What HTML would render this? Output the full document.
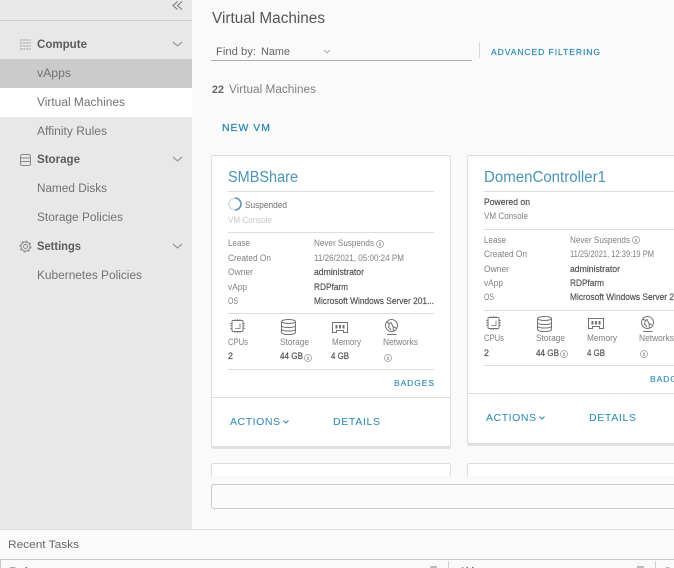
<!DOCTYPE html>
<html lang="en"><head><meta charset="utf-8"><title>Virtual Machines</title>
<style>
html,body{margin:0;padding:0;width:674px;height:568px;overflow:hidden;background:#fafafa}
svg{display:block}
text{font-family:"Liberation Sans",sans-serif;font-size:11px;fill:#777}
.nav{fill:#727272;font-size:11.500px}
.navb{fill:#5c5c5c;font-size:11.500px;font-weight:bold}
.lnk{fill:#2686b0;font-size:10.500px}
.ttl{fill:#4a94b8;font-size:15.500px}
.s{font-size:9.500px;fill:#808080}
.d,.db{font-size:9.500px;fill:#505050;stroke:#505050;stroke-width:.18}
.ic{fill:none;stroke:#737373;stroke-width:1}
.chev{fill:none;stroke:#999;stroke-width:1.200}
.ln{stroke:#dedede;stroke-width:1}
</style></head>
<body>
<svg width="674" height="568" viewBox="0 0 674 568" xmlns="http://www.w3.org/2000/svg">
<defs>
<g id="i"><circle cx="0" cy="0" r="3.500" fill="none" stroke="#999" stroke-width=".8"/><path d="M0-1.500V2" stroke="#777" stroke-width="1"/></g>
<g id="cpu" class="ic"><rect x="2" y="1.500" width="11" height="11" rx="1"/><path d="M10 4.500V9.500H5M0 4.500H2M0 7H2M0 9.500H2M13 4.500H15M13 7H15M13 9.500H15M5 0V1.500M7.500 0V1.500M10 0V1.500M5 12.500V14M7.500 12.500V14M10 12.500V14" stroke-width=".8"/></g>
<g id="sto" class="ic"><ellipse cx="7.500" cy="2.500" rx="7" ry="2"/><path d="M.5 2.500V13Q.5 15.500 7.500 15.500T14.500 13V2.500M.5 6.500Q.5 8.500 7.500 8.500T14.500 6.500M.5 10Q.5 12 7.500 12T14.500 10"/></g>
<g id="mem" class="ic"><path d="M.5.5H15.500V10.500H11.500V8.500H4.500V10.500H.5Z"/><path d="M4.500 3V6.500M8 3V6.500M11.500 3V6.500" stroke-width="2"/></g>
<g id="net" class="ic"><circle cx="6.500" cy="6.500" r="6"/><path d="M1.500 3L4.500 4.500 6 3.500 8 7.500 11 9M4.500 4.500L3.500 8 6 11M8 7.500L8.500 12.500M2 15.500H11.500"/></g>
</defs>

<rect width="674" height="568" fill="#fafafa"/>

<!-- sidebar -->
<rect x="0" y="0" width="192" height="529" fill="#e8e8e8"/>
<rect x="0" y="20" width="192" height="1" fill="#cfcfcf"/>
<rect x="0" y="59" width="192" height="29" fill="#cbcbcb"/>
<rect x="0" y="88" width="192" height="29" fill="#ffffff"/>
<path d="M177.500 1.500L173 5.500 177.500 9.500M182 1.500L177.500 5.500 182 9.500" fill="none" stroke="#777" stroke-width="1"/>

<path d="M20 40h11M20 43h11M20 46h11M20 49h11" fill="none" stroke="#b5b5b5" stroke-width="1.600" stroke-dasharray="2.200 1"/>
<text class="navb" x="37" y="48" textLength="50" lengthAdjust="spacingAndGlyphs">Compute</text>
<path d="M173 42L177.500 46 182 42" class="chev"/>
<text class="nav" x="37" y="77" textLength="34" lengthAdjust="spacingAndGlyphs">vApps</text>
<text class="nav" x="37" y="106" textLength="88" lengthAdjust="spacingAndGlyphs">Virtual Machines</text>
<text class="nav" x="37" y="135" textLength="70" lengthAdjust="spacingAndGlyphs">Affinity Rules</text>

<path d="M20.500 156.500Q20.500 154.500 22.500 154.500H28.500Q30.500 154.500 30.500 156.500V164Q30.500 165.500 28.500 165.500H22.500Q20.500 165.500 20.500 164ZM20.500 158H30.500M20.500 161.500H30.500" fill="none" stroke="#888"/>
<text class="navb" x="37" y="163" textLength="43" lengthAdjust="spacingAndGlyphs">Storage</text>
<path d="M173 157L177.500 161 182 157" class="chev"/>
<text class="nav" x="37" y="192" textLength="70" lengthAdjust="spacingAndGlyphs">Named Disks</text>
<text class="nav" x="37" y="221" textLength="86" lengthAdjust="spacingAndGlyphs">Storage Policies</text>

<circle cx="25.500" cy="246.500" r="2" fill="none" stroke="#888" stroke-width=".9"/>
<circle cx="25.500" cy="246.500" r="4.500" fill="none" stroke="#888" stroke-width=".9"/>
<circle cx="25.500" cy="246.500" r="5.500" fill="none" stroke="#888" stroke-width="1.100" stroke-dasharray="2 2.300"/>
<text class="navb" x="37" y="250" textLength="44" lengthAdjust="spacingAndGlyphs">Settings</text>
<path d="M173 244L177.500 248 182 244" class="chev"/>
<text class="nav" x="37" y="279" textLength="105" lengthAdjust="spacingAndGlyphs">Kubernetes Policies</text>

<!-- header -->
<text x="212" y="23" textLength="113" lengthAdjust="spacingAndGlyphs" style="font-size:15.500px;fill:#555">Virtual Machines</text>
<text x="216" y="55" textLength="40" lengthAdjust="spacingAndGlyphs" style="fill:#666">Find by:</text>
<text x="261" y="55" textLength="29" lengthAdjust="spacingAndGlyphs" style="fill:#666">Name</text>
<path d="M324 50L327 53 330 50" fill="none" stroke="#aaa"/>
<rect x="211" y="60" width="261" height="1" fill="#aaaaaa"/>
<rect x="479" y="42" width="1" height="16" fill="#d8d8d8"/>
<text class="lnk" x="491" y="55" textLength="109" lengthAdjust="spacing" style="font-size:8.500px;stroke:#2b86ad;stroke-width:.15">ADVANCED FILTERING</text>
<text x="212" y="93" textLength="12" lengthAdjust="spacingAndGlyphs" style="font-weight:bold;fill:#666">22</text>
<text x="229" y="93" textLength="87" lengthAdjust="spacingAndGlyphs" style="fill:#808080;font-size:11.500px">Virtual Machines</text>
<text class="lnk" x="222" y="131" textLength="48" lengthAdjust="spacing" style="font-size:10.500px;stroke:#2686b0;stroke-width:.2">NEW VM</text>

<!-- lower cards -->
<rect x="211.500" y="463.500" width="239" height="30" rx="2" fill="#fff" stroke="#dcdcdc"/>
<rect x="467.500" y="463.500" width="230" height="30" rx="2" fill="#fff" stroke="#dcdcdc"/>
<rect x="200" y="476" width="474" height="53" fill="#fafafa"/>
<rect x="211.500" y="484.500" width="480" height="24" rx="2" fill="#fafafa" stroke="#cccccc"/>

<!-- card 1 -->
<rect x="211" y="157" width="240" height="292" rx="2" fill="#e2e2e2"/>
<rect x="211.500" y="155.500" width="239" height="291" rx="2" fill="#fff" stroke="#dedede"/>
<text class="ttl" x="228" y="182" textLength="70" lengthAdjust="spacingAndGlyphs">SMBShare</text>
<path class="ln" d="M228 191.500H434M228 232.500H434M228 313.500H434M228 369.500H434M212 397.500H450"/>
<circle cx="235" cy="204" r="6" fill="none" stroke="#d8e0e4" stroke-width="1.600"/>
<path d="M235 198A6 6 0 0 1 235 210" fill="none" stroke="#5a9cbb" stroke-width="1.600"/>
<text class="s" x="245" y="208" textLength="42" lengthAdjust="spacingAndGlyphs" style="fill:#707070">Suspended</text>
<text class="s" x="228" y="223" textLength="44" lengthAdjust="spacingAndGlyphs" style="fill:#c8c8c8">VM Console</text>
<text class="s" x="228" y="246" textLength="22" lengthAdjust="spacingAndGlyphs">Lease</text>
<text class="s" x="228" y="261" textLength="43" lengthAdjust="spacingAndGlyphs">Created On</text>
<text class="s" x="228" y="275" textLength="25" lengthAdjust="spacingAndGlyphs">Owner</text>
<text class="s" x="228" y="290" textLength="19" lengthAdjust="spacingAndGlyphs">vApp</text>
<text class="s" x="228" y="304" textLength="10" lengthAdjust="spacingAndGlyphs">OS</text>
<text class="s" x="314" y="246" textLength="60" lengthAdjust="spacingAndGlyphs">Never Suspends</text>
<use href="#i" x="380" y="244"/>
<text class="s" x="314" y="261" textLength="90" lengthAdjust="spacingAndGlyphs">11/26/2021, 05:00:24 PM</text>
<text class="d" x="314" y="275" textLength="50" lengthAdjust="spacingAndGlyphs">administrator</text>
<text class="d" x="314" y="290" textLength="34" lengthAdjust="spacingAndGlyphs">RDPfarm</text>
<text class="d" x="314" y="304" textLength="120" lengthAdjust="spacingAndGlyphs">Microsoft Windows Server 201...</text>
<use href="#cpu" x="230" y="319"/>
<use href="#sto" x="281" y="319"/>
<use href="#mem" x="332" y="322"/>
<use href="#net" x="385" y="319"/>
<text class="s" x="228" y="345" textLength="20" lengthAdjust="spacingAndGlyphs">CPUs</text>
<text class="s" x="280" y="345" textLength="29" lengthAdjust="spacingAndGlyphs">Storage</text>
<text class="s" x="332" y="345" textLength="29" lengthAdjust="spacingAndGlyphs">Memory</text>
<text class="s" x="383" y="345" textLength="35" lengthAdjust="spacingAndGlyphs">Networks</text>
<text class="db" x="228" y="359" textLength="5" lengthAdjust="spacingAndGlyphs">2</text>
<text class="db" x="280" y="359" textLength="23" lengthAdjust="spacingAndGlyphs">44 GB</text>
<use href="#i" x="308" y="358"/>
<text class="db" x="331" y="359" textLength="18" lengthAdjust="spacingAndGlyphs">4 GB</text>
<use href="#i" x="388" y="358"/>
<text class="lnk" x="394" y="386" textLength="40" lengthAdjust="spacing" style="font-size:8.500px;stroke:#2686b0;stroke-width:.1">BADGES</text>
<text class="lnk" x="230" y="425" textLength="50" lengthAdjust="spacing">ACTIONS</text>
<path d="M283.500 420.500L286 423 288.500 420.500" fill="none" stroke="#2b86ad"/>
<text class="lnk" x="333" y="425" textLength="47" lengthAdjust="spacing">DETAILS</text>

<!-- card 2 -->
<rect x="467" y="157" width="230" height="289" rx="2" fill="#e2e2e2"/>
<rect x="467.500" y="155.500" width="230" height="288" rx="2" fill="#fff" stroke="#dedede"/>
<text class="ttl" x="484" y="182" textLength="122" lengthAdjust="spacingAndGlyphs">DomenController1</text>
<path class="ln" d="M484 191.500H674M484 229.500H674M484 310.500H674M484 365.500H674M468 393.500H674"/>
<text class="db" x="484" y="205" textLength="46" lengthAdjust="spacingAndGlyphs">Powered on</text>
<text class="s" x="484" y="219" textLength="44" lengthAdjust="spacingAndGlyphs">VM Console</text>
<text class="s" x="484" y="243" textLength="22" lengthAdjust="spacingAndGlyphs">Lease</text>
<text class="s" x="484" y="257" textLength="43" lengthAdjust="spacingAndGlyphs">Created On</text>
<text class="s" x="484" y="272" textLength="25" lengthAdjust="spacingAndGlyphs">Owner</text>
<text class="s" x="484" y="286" textLength="19" lengthAdjust="spacingAndGlyphs">vApp</text>
<text class="s" x="484" y="300" textLength="10" lengthAdjust="spacingAndGlyphs">OS</text>
<text class="s" x="570" y="243" textLength="60" lengthAdjust="spacingAndGlyphs">Never Suspends</text>
<use href="#i" x="636" y="240"/>
<text class="s" x="570" y="257" textLength="84" lengthAdjust="spacingAndGlyphs">11/25/2021, 12:39:19 PM</text>
<text class="d" x="570" y="272" textLength="50" lengthAdjust="spacingAndGlyphs">administrator</text>
<text class="d" x="570" y="286" textLength="34" lengthAdjust="spacingAndGlyphs">RDPfarm</text>
<text class="d" x="570" y="300" textLength="104" lengthAdjust="spacingAndGlyphs">Microsoft Windows Server 2</text>
<use href="#cpu" x="486" y="316"/>
<use href="#sto" x="537" y="316"/>
<use href="#mem" x="588" y="318"/>
<use href="#net" x="641" y="316"/>
<text class="s" x="484" y="341" textLength="20" lengthAdjust="spacingAndGlyphs">CPUs</text>
<text class="s" x="536" y="341" textLength="29" lengthAdjust="spacingAndGlyphs">Storage</text>
<text class="s" x="587" y="341" textLength="30" lengthAdjust="spacingAndGlyphs">Memory</text>
<text class="s" x="639" y="341" textLength="35" lengthAdjust="spacingAndGlyphs">Networks</text>
<text class="db" x="484" y="356" textLength="5" lengthAdjust="spacingAndGlyphs">2</text>
<text class="db" x="536" y="356" textLength="23" lengthAdjust="spacingAndGlyphs">44 GB</text>
<use href="#i" x="564" y="354"/>
<text class="db" x="587" y="356" textLength="18" lengthAdjust="spacingAndGlyphs">4 GB</text>
<use href="#i" x="644" y="354"/>
<text class="lnk" x="650" y="382" textLength="40" lengthAdjust="spacing" style="font-size:8.500px;stroke:#2686b0;stroke-width:.1">BADGES</text>
<text class="lnk" x="486" y="421" textLength="50" lengthAdjust="spacing">ACTIONS</text>
<path d="M539.500 416.500L542 419 544.500 416.500" fill="none" stroke="#2b86ad"/>
<text class="lnk" x="589" y="421" textLength="47" lengthAdjust="spacing">DETAILS</text>

<!-- bottom panel -->
<rect x="0" y="529" width="674" height="39" fill="#fafafa"/>
<rect x="0" y="529" width="674" height="1" fill="#dedede"/>
<text x="8" y="548" textLength="71" lengthAdjust="spacingAndGlyphs" style="fill:#666">Recent Tasks</text>
<rect x="0" y="559" width="674" height="1" fill="#c8c8c8"/>
<rect x="0" y="560" width="1" height="8" fill="#c8c8c8"/>
<rect x="448" y="561" width="1" height="7" fill="#d0d0d0"/>
<rect x="655" y="561" width="1" height="7" fill="#d0d0d0"/>
<text x="10" y="575" textLength="20" lengthAdjust="spacingAndGlyphs" style="fill:#555;font-weight:bold">Task</text>
<text x="459" y="575" textLength="20" lengthAdjust="spacingAndGlyphs" style="fill:#555;font-weight:bold">Obje</text>
<text x="664" y="575" style="fill:#555;font-weight:bold">S</text>
<rect x="430" y="566" width="7" height="2" fill="#bbb"/>
<rect x="637" y="566" width="7" height="2" fill="#bbb"/>
</svg>
</body></html>
